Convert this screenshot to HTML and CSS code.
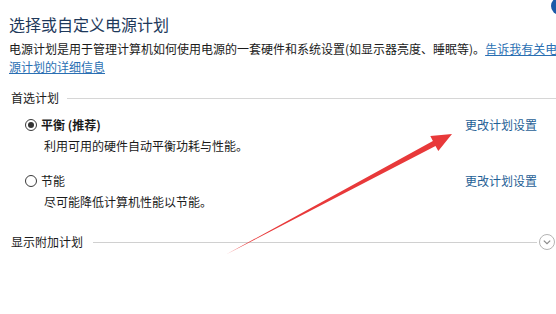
FILE: index.html
```html
<!DOCTYPE html>
<html lang="zh-CN">
<head>
<meta charset="utf-8">
<title>电源选项</title>
<link rel="stylesheet" href="styles.css">
</head>
<body>
<div class="page">
  <span class="help-dot"></span>
  <h1 class="title">选择或自定义电源计划</h1>
  <p class="intro">电源计划是用于管理计算机如何使用电源的一套硬件和系统设置(如显示器亮度、睡眠等)。<a class="link" href="#">告诉我有关电<br>源计划的详细信息</a></p>

  <div class="section-head">
    <span class="section-label">首选计划</span>
    <span class="rule"></span>
  </div>

  <div class="plan plan-first">
    <div class="plan-left">
      <div class="plan-name"><span class="radio checked"></span><b>平衡 (推荐)</b></div>
      <div class="plan-desc">利用可用的硬件自动平衡功耗与性能。</div>
    </div>
    <a class="plan-link" href="#">更改计划设置</a>
  </div>

  <div class="plan plan-second">
    <div class="plan-left">
      <div class="plan-name"><span class="radio"></span><span>节能</span></div>
      <div class="plan-desc">尽可能降低计算机性能以节能。</div>
    </div>
    <a class="plan-link" href="#">更改计划设置</a>
  </div>

  <div class="section-head extra">
    <span class="section-label">显示附加计划</span>
    <span class="rule"></span>
    <span class="expand">
      <svg width="16" height="16" viewBox="0 0 16 16"><circle cx="8" cy="8" r="7.5" fill="#fff" stroke="#b4b4b4" stroke-width="1"/><path d="M4.8 6.6 L8 9.6 L11.2 6.6" fill="none" stroke="#8a8a8a" stroke-width="1.2"/></svg>
    </span>
  </div>

  <svg class="arrow" width="556" height="314" viewBox="0 0 556 314">
    <polygon points="226,254.5 432.9,141 430.3,136 452,134 438.3,151 435.5,146" fill="#e8393a"/>
  </svg>
</div>
</body>
</html>
```

FILE: styles.css
```css
html, body {
  margin: 0;
  padding: 0;
  overflow: hidden;
  background: #ffffff;
}

.page {
  position: relative;
  width: 556px;
  height: 314px;
  box-sizing: border-box;
  padding: 13px 0 0 9px;
  font-family: "Noto Sans CJK SC", "Microsoft YaHei", sans-serif;
  font-size: 12px;
  color: #1a1a1a;
  overflow: hidden;
}

.help-dot {
  position: absolute;
  top: -3px;
  right: -13px;
  width: 18px;
  height: 18px;
  border-radius: 50%;
  background: #1c5aa8;
}

.title {
  margin: 0;
  font-size: 16px;
  font-weight: normal;
  line-height: 22px;
  color: #1e395b;
}

.intro {
  margin: 5px 0 0 0;
  line-height: 18px;
  white-space: nowrap;
}

.link {
  color: #2a6fb3;
  text-decoration: underline;
}

.section-head {
  display: flex;
  align-items: center;
  margin-top: 13px;
  margin-left: 2px;
  line-height: 18px;
}

.section-label {
  flex: none;
}

.rule {
  flex: 1;
  height: 1px;
  background: #d6d6d6;
  margin-left: 8px;
}

.section-head.extra {
  margin-top: 22px;
  margin-right: 1px;
}

.section-head.extra .rule {
  margin-left: 10px;
  background: #d0d0d0;
}

.expand {
  flex: none;
  display: flex;
  margin-left: 2px;
}

.plan {
  display: flex;
  justify-content: space-between;
  align-items: flex-start;
  margin-left: 16px;
  margin-right: 19px;
  line-height: 18px;
}

.plan-first {
  margin-top: 9px;
}

.plan-second {
  margin-top: 17px;
}

.plan-name {
  display: flex;
  align-items: center;
}

.plan-name b {
  font-weight: bold;
}

.radio {
  flex: none;
  box-sizing: border-box;
  width: 12px;
  height: 12px;
  border: 1px solid #3a3a3a;
  border-radius: 50%;
  margin-right: 4px;
  display: flex;
  align-items: center;
  justify-content: center;
}

.radio.checked::after {
  content: "";
  width: 6px;
  height: 6px;
  border-radius: 50%;
  background: #333333;
}

.plan-desc {
  margin-top: 3px;
  margin-left: 19px;
}

.plan-link {
  color: #1f5f96;
  text-decoration: none;
}

.arrow {
  position: absolute;
  left: 0;
  top: 0;
  pointer-events: none;
}
```
